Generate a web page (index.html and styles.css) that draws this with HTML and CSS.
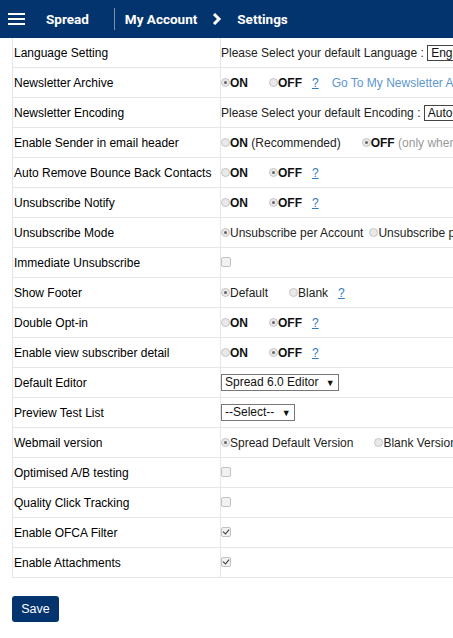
FILE: index.html
```html
<!DOCTYPE html>
<html>
<head>
<meta charset="utf-8">
<link rel="stylesheet" href="styles.css">
</head>
<body>
<header class="topbar">
  <span class="burger"><i></i><i></i><i></i></span>
  <span class="brand">Spread</span>
  <span class="sep"></span>
  <span class="crumb">My Account</span>
  <svg class="chev" width="10" height="12" viewBox="0 0 10 12"><path d="M2 1 L7 6 L2 11" fill="none" stroke="#fff" stroke-width="3"/></svg>
  <span class="crumb crumb-last">Settings</span>
</header>
<main class="content">
  <div class="table-wrap">
    <table class="settings">
      <colgroup><col class="c1"><col class="c2"></colgroup>
      <tr><td class="lbl">Language Setting</td><td class="val">Please Select your default Language : <span class="sel sel-lang">English</span></td></tr>
      <tr><td class="lbl">Newsletter Archive</td><td class="val"><span class="opt"><span class="radio on"></span><b>ON</b></span><span class="opt"><span class="radio"></span><b>OFF</b></span><a class="help">?</a><a class="link">Go To My Newsletter Archive</a></td></tr>
      <tr><td class="lbl">Newsletter Encoding</td><td class="val">Please Select your default Encoding : <span class="sel sel-lang">Auto-Detect</span></td></tr>
      <tr><td class="lbl">Enable Sender in email header</td><td class="val"><span class="opt"><span class="radio"></span><b>ON</b> (Recommended)</span><span class="opt"><span class="radio on"></span><b>OFF</b> <span class="muted">(only when needed)</span></span></td></tr>
      <tr><td class="lbl">Auto Remove Bounce Back Contacts</td><td class="val"><span class="opt"><span class="radio"></span><b>ON</b></span><span class="opt"><span class="radio on"></span><b>OFF</b></span><a class="help">?</a></td></tr>
      <tr><td class="lbl">Unsubscribe Notify</td><td class="val"><span class="opt"><span class="radio"></span><b>ON</b></span><span class="opt"><span class="radio on"></span><b>OFF</b></span><a class="help">?</a></td></tr>
      <tr><td class="lbl">Unsubscribe Mode</td><td class="val"><span class="opt opt-tight"><span class="radio on"></span>Unsubscribe per Account</span><span class="opt"><span class="radio"></span>Unsubscribe per List</span></td></tr>
      <tr><td class="lbl">Immediate Unsubscribe</td><td class="val"><span class="check"></span></td></tr>
      <tr><td class="lbl">Show Footer</td><td class="val"><span class="opt"><span class="radio on"></span>Default</span><span class="opt"><span class="radio"></span>Blank</span><a class="help">?</a></td></tr>
      <tr><td class="lbl">Double Opt-in</td><td class="val"><span class="opt"><span class="radio"></span><b>ON</b></span><span class="opt"><span class="radio on"></span><b>OFF</b></span><a class="help">?</a></td></tr>
      <tr><td class="lbl">Enable view subscriber detail</td><td class="val"><span class="opt"><span class="radio"></span><b>ON</b></span><span class="opt"><span class="radio on"></span><b>OFF</b></span><a class="help">?</a></td></tr>
      <tr><td class="lbl">Default Editor</td><td class="val"><span class="sel">Spread 6.0 Editor <span class="arrow">▼</span></span></td></tr>
      <tr><td class="lbl">Preview Test List</td><td class="val"><span class="sel">--Select-- <span class="arrow">▼</span></span></td></tr>
      <tr><td class="lbl">Webmail version</td><td class="val"><span class="opt"><span class="radio on"></span>Spread Default Version</span><span class="opt"><span class="radio"></span>Blank Version</span></td></tr>
      <tr><td class="lbl">Optimised A/B testing</td><td class="val"><span class="check"></span></td></tr>
      <tr><td class="lbl">Quality Click Tracking</td><td class="val"><span class="check"></span></td></tr>
      <tr><td class="lbl">Enable OFCA Filter</td><td class="val"><span class="check checked"></span></td></tr>
      <tr><td class="lbl">Enable Attachments</td><td class="val"><span class="check checked"></span></td></tr>
    </table>
  </div>
  <button class="save">Save</button>
</main>
</body>
</html>
```
FILE: styles.css
```css
html, body { margin: 0; padding: 0; }
body {
  font-family: "Liberation Sans", Arial, sans-serif;
  font-size: 12px;
  color: #111;
  background: #fff;
  overflow: hidden;
}
.topbar {
  height: 38px;
  background: #04346d;
  display: flex;
  align-items: center;
  color: #fff;
  font-family: Roboto, "Liberation Sans", sans-serif;
  font-weight: 700;
  font-size: 13.5px;
}
.burger {
  display: flex;
  flex-direction: column;
  gap: 3px;
  margin-left: 8px;
  width: 17px;
}
.burger i { display: block; height: 2px; background: #fff; }
.brand { margin-left: 21px; }
.sep { width: 1px; height: 22px; background: #7d8fab; margin-left: 25px; }
.crumb { margin-left: 10px; }
.chev { margin-left: 15px; }
.crumb-last { margin-left: 15px; }
.content { padding: 0 12px; }
.table-wrap { width: 441px; overflow: hidden; }
.settings {
  border-collapse: collapse;
  white-space: nowrap;
  table-layout: fixed;
  width: 720px;
}
.c1 { width: 208px; }
.settings td {
  height: 29px;
  padding: 0 1px;
  border: 1px solid #e6e6e6;
  vertical-align: middle;
  overflow: hidden;
}
.settings td.val { padding-left: 0; }
.settings tr:first-child td { border-top: none; }
.lbl { color: #000; }
.val { color: #222; }
.opt { display: inline-block; margin-right: 21px; }
.opt-tight { margin-right: 6px; }
.radio {
  display: inline-block;
  width: 7px;
  height: 7px;
  border-radius: 50%;
  border: 1px solid #c4c4c4;
  background: #e9e9e9;
  position: relative;
  top: -1px;
  box-sizing: content-box;
  vertical-align: middle;
}
.radio.on::after {
  content: "";
  position: absolute;
  left: 2px; top: 2px;
  width: 3px; height: 3px;
  border-radius: 50%;
  background: #666;
}
b { font-weight: 700; color: #111; }
.muted { color: #999; }
.help { color: #2f7bbf; text-decoration: underline; margin-left: -11px; margin-right: 13px; }
.link { color: #5d97cf; }
.check {
  display: inline-block;
  width: 8px;
  height: 8px;
  border: 1px solid #c2c2c2;
  border-radius: 2px;
  background: #f1f1f1;
  vertical-align: middle;
  position: relative;
  top: -1px;
}
.check.checked::after {
  content: "";
  position: absolute;
  left: 2px; top: 0px;
  width: 3px; height: 5px;
  border: solid #333;
  border-width: 0 1.5px 1.5px 0;
  transform: rotate(40deg);
}
.sel {
  display: inline-block;
  border: 1px solid #777;
  padding: 0 3px;
  line-height: 14px;
  color: #111;
  font-size: 12px;
}
.sel-lang { border-color: #444; }
.arrow { font-size: 9px; margin-left: 4px; }
.save {
  margin-top: 18px;
  width: 47px;
  height: 26px;
  border: none;
  border-radius: 3px;
  background: #04346d;
  color: #fff;
  font-family: "Liberation Sans", Arial, sans-serif;
  font-size: 12.5px;
  padding: 0;
}
```
